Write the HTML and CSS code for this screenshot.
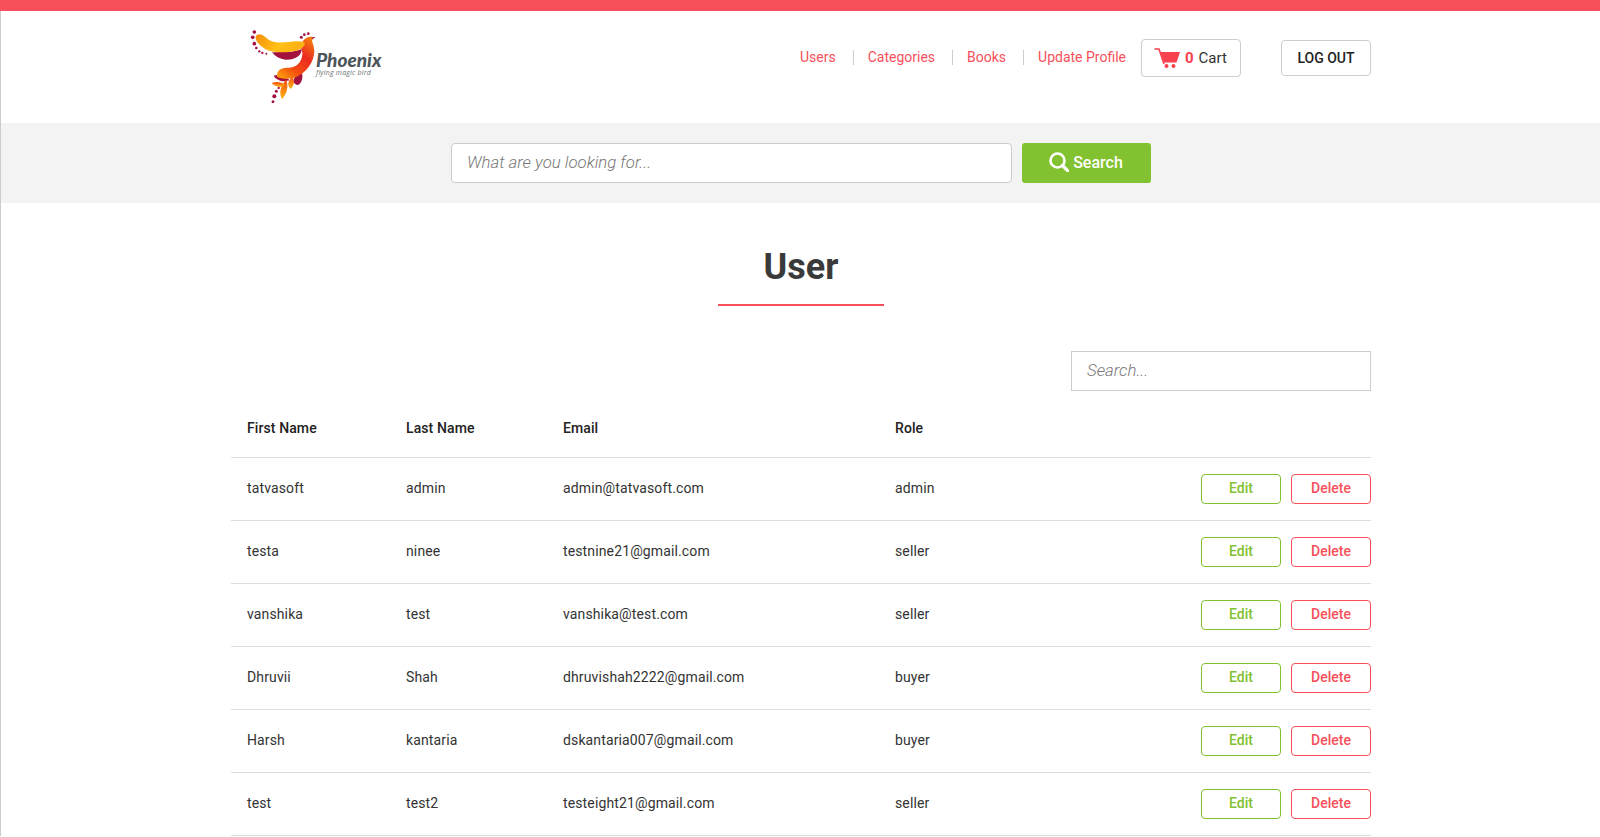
FILE: index.html
```html
<!DOCTYPE html>
<html lang="en">
<head>
<meta charset="utf-8">
<title>User</title>
<link rel="stylesheet" href="styles.css">
</head>
<body>
<div class="topbar"></div>
<div class="page">
  <header class="container header">
    <a class="logo" href="#">
      <svg class="logo-mark" viewBox="50 85 210 225" aria-hidden="true">
        <defs>
          <linearGradient id="gw" x1="0" y1="0" x2="1" y2="0.2"><stop offset="0" stop-color="#f98d0c"/><stop offset="0.55" stop-color="#ffc014"/><stop offset="1" stop-color="#fbb013"/></linearGradient>
          <linearGradient id="gb" x1="0.8" y1="0" x2="0.1" y2="1"><stop offset="0" stop-color="#f5790f"/><stop offset="0.35" stop-color="#ea2a20"/><stop offset="0.7" stop-color="#f4500f"/><stop offset="1" stop-color="#fda00d"/></linearGradient>
          <linearGradient id="gf" x1="0" y1="0" x2="0" y2="1"><stop offset="0" stop-color="#f4500f"/><stop offset="1" stop-color="#ffb514"/></linearGradient>
        </defs>
        <g fill="#a3123f">
          <circle cx="72" cy="97" r="5.500"/><circle cx="67" cy="113" r="5.500"/><circle cx="72" cy="132" r="5.500"/><circle cx="78" cy="145" r="4"/><circle cx="87" cy="155" r="3.500"/><circle cx="96" cy="160" r="3.500"/><circle cx="108" cy="162" r="3"/>
          <circle cx="213" cy="113" r="4.500"/><circle cx="222" cy="105" r="4"/><circle cx="234" cy="102" r="4"/>
          <circle cx="145" cy="265" r="3.500"/><circle cx="138" cy="275" r="4.500"/><circle cx="132" cy="290" r="6"/><circle cx="128" cy="306" r="4.500"/>
          <path d="M125 158C150 156 190 160 214 148C216 168 190 182 165 180C148 178 134 170 125 158Z"/>
          <path d="M130 228C145 222 167 232 178 242C160 248 138 243 130 228Z"/>
          <path d="M190 241C193 228 205 222 215 220C219 235 213 254 202 256C193 254 188 248 190 241Z"/>
          <path d="M238 112L255 112L244 121Z"/>
        </g>
        <path fill="url(#gb)" d="M214 130C222 115 232 108 248 112C240 122 252 135 252 155C252 185 228 222 192 234C175 239 155 238 140 231C138 215 150 203 172 204C192 205 208 195 214 175C219 160 215 145 205 137Z"/>
        <path fill="url(#gw)" d="M76 110C80 100 95 102 105 112C118 126 135 130 165 128C185 127 205 122 222 128C228 135 215 150 195 154C165 160 125 160 103 147C88 137 74 125 76 110Z"/>
        <path fill="url(#gf)" d="M168 240C148 258 146 285 155 298C168 285 176 262 168 240Z"/>
        <path fill="url(#gf)" d="M186 232C172 243 170 258 181 268C192 256 194 245 186 232Z"/>
        <path fill="url(#gf)" d="M124 250C140 244 156 248 164 256C152 266 134 262 124 250Z"/>
      </svg>
      <span class="logo-text"><span class="logo-name">Phoenix</span><span class="logo-tag">flying magic bird</span></span>
    </a>
    <div class="header-right">
      <nav class="nav">
        <a class="nav-link" href="#">Users</a>
        <a class="nav-link" href="#">Categories</a>
        <a class="nav-link" href="#">Books</a>
        <a class="nav-link" href="#">Update Profile</a>
      </nav>
      <a class="cart" href="#">
        <svg class="cart-icon" viewBox="0 0 26 20" aria-hidden="true">
          <path d="M0.5 1H5L10 16" fill="none" stroke="#f8414e" stroke-width="1.6"/>
          <path fill="#f8414e" d="M6.5 4H26L22.5 14.500H10Z"/>
          <circle cx="12.500" cy="18" r="2" fill="#f8414e"/><circle cx="19.500" cy="18" r="2" fill="#f8414e"/>
        </svg>
        <span class="cart-count">0</span><span class="cart-label">Cart</span>
      </a>
      <a class="logout" href="#">LOG OUT</a>
    </div>
  </header>

  <section class="search-band">
    <input class="search-input" type="text" placeholder="What are you looking for...">
    <button class="search-btn" type="button">
      <svg class="search-icon" viewBox="0 0 20 20" aria-hidden="true"><circle cx="8.500" cy="8.500" r="7" fill="none" stroke="#fff" stroke-width="2.600"/><path d="M13.500 13.500L19 19" stroke="#fff" stroke-width="3.200" stroke-linecap="round"/></svg>
      <span>Search</span>
    </button>
  </section>

  <main class="container content">
    <h1 class="title">User</h1>
    <div class="title-rule"></div>
    <div class="filter"><input class="filter-input" type="text" placeholder="Search..."></div>
    <table class="users">
      <thead>
        <tr><th class="c1">First Name</th><th class="c2">Last Name</th><th class="c3">Email</th><th class="c4">Role</th><th class="c5"></th></tr>
      </thead>
      <tbody>
        <tr><td>tatvasoft</td><td>admin</td><td>admin@tatvasoft.com</td><td>admin</td><td class="actions"><a class="btn edit" href="#">Edit</a><a class="btn delete" href="#">Delete</a></td></tr>
        <tr><td>testa</td><td>ninee</td><td>testnine21@gmail.com</td><td>seller</td><td class="actions"><a class="btn edit" href="#">Edit</a><a class="btn delete" href="#">Delete</a></td></tr>
        <tr><td>vanshika</td><td>test</td><td>vanshika@test.com</td><td>seller</td><td class="actions"><a class="btn edit" href="#">Edit</a><a class="btn delete" href="#">Delete</a></td></tr>
        <tr><td>Dhruvii</td><td>Shah</td><td>dhruvishah2222@gmail.com</td><td>buyer</td><td class="actions"><a class="btn edit" href="#">Edit</a><a class="btn delete" href="#">Delete</a></td></tr>
        <tr><td>Harsh</td><td>kantaria</td><td>dskantaria007@gmail.com</td><td>buyer</td><td class="actions"><a class="btn edit" href="#">Edit</a><a class="btn delete" href="#">Delete</a></td></tr>
        <tr><td>test</td><td>test2</td><td>testeight21@gmail.com</td><td>seller</td><td class="actions"><a class="btn edit" href="#">Edit</a><a class="btn delete" href="#">Delete</a></td></tr>
      </tbody>
    </table>
  </main>
</div>
</body>
</html>
```
FILE: styles.css
```css
* { box-sizing: border-box; }
html, body { margin: 0; height: 837px; overflow: hidden; background: #fff; }
body { font-family: Roboto, "Liberation Sans", sans-serif; font-size: 14px; color: #333; }
a { text-decoration: none; }

.topbar { height: 11px; background: #f7505a; }
.page { border-left: 1px solid #ccc; margin: 0; }
.container { width: 1140px; margin-left: 230px; }

.header { height: 112px; display: flex; justify-content: space-between; align-items: flex-start; }
.logo { display: flex; margin: 17px 0 0 16px; align-items: flex-start; }
.logo-mark { width: 70px; height: 75px; flex: none; }
.logo-text { display: flex; flex-direction: column; margin: 22px 0 0 -1px; }
.logo-name { font: italic 900 19px/20px Lato, sans-serif; color: #4d5558; }
.logo-tag { font: italic 400 7px/6px "Open Sans", sans-serif; color: #6b7275; letter-spacing: 0.2px; }

.header-right { display: flex; align-items: flex-start; padding-top: 28px; }
.nav { display: flex; align-items: center; height: 37px; }
.nav-link { color: #f7505a; font-size: 14px; line-height: 15px; padding: 0 17px 0 14px; border-right: 1px solid #ccc; }
.nav-link:last-child { border-right: 0; padding-right: 15px; }

.cart { display: flex; align-items: center; width: 100px; height: 38px; border: 1px solid #ccc; border-radius: 4px; padding-left: 13px; color: #333; font-size: 15px; }
.cart-icon { width: 26px; height: 20px; margin-left: -1px; flex: none; }
.cart-count { color: #f8414e; font-weight: 700; margin-left: 5px; }
.cart-label { margin-left: 5px; }

.logout { display: flex; align-items: center; justify-content: center; width: 90px; height: 36px; margin: 1px 0 0 40px; border: 1px solid #ccc; border-radius: 4px; color: #222; font-weight: 500; }

.search-band { height: 80px; background: #f3f3f3; display: flex; justify-content: center; align-items: center; gap: 10px; padding-left: 1px; }
.search-input { width: 561px; height: 40px; border: 1px solid #ccc; border-radius: 4px; padding: 0 15px 2px; font: italic 300 16.8px Roboto, sans-serif; color: #333; background: #fff; }
.search-input::placeholder, .filter-input::placeholder { color: #777; opacity: 1; }
.search-btn { width: 129px; height: 40px; border: 0; border-radius: 3px; background: #82c12f; color: #fff; font: 500 16px Roboto, sans-serif; display: flex; align-items: center; justify-content: center; gap: 4px; padding: 0 1px 2px 0; }
.search-icon { width: 20px; height: 20px; }

.content { display: flex; flex-direction: column; }
.title { margin: 41px 0 0; height: 46px; text-align: center; font-size: 36px; line-height: 46px; font-weight: 700; color: #3a3a3a; }
.title-rule { width: 166px; height: 2px; background: #f7505a; margin: 14px auto 0; }
.filter { display: flex; justify-content: flex-end; margin-top: 45px; }
.filter-input { width: 300px; height: 40px; border: 1px solid #ccc; padding: 0 15px 2px; font: italic 300 16.8px Roboto, sans-serif; }

.users { width: 1140px; border-collapse: collapse; table-layout: fixed; margin-top: 3px; }
.users th { height: 63px; padding: 6px 15px 0; text-align: left; font-weight: 500; color: #222; border-bottom: 1px solid #ddd; letter-spacing: 0.1px; }
.users td { height: 63px; padding: 0 15px 2px; color: #333; border-bottom: 1px solid #ddd; letter-spacing: 0.13px; }
.users tr > :nth-child(-n+2) { padding-left: 16px; }
.c1 { width: 159px; }
.c2 { width: 158px; }
.c3 { width: 332px; }
.c4 { width: 150px; }
.users .actions { text-align: right; white-space: nowrap; padding: 0; letter-spacing: 0; }
.btn { display: inline-block; width: 80px; height: 30px; line-height: 26px; text-align: center; border: 1px solid; border-radius: 4px; font-weight: 500; }
.edit { color: #82c12f; border-color: #82c12f; }
.delete { color: #f7505a; border-color: #f7505a; margin-left: 10px; }
```
